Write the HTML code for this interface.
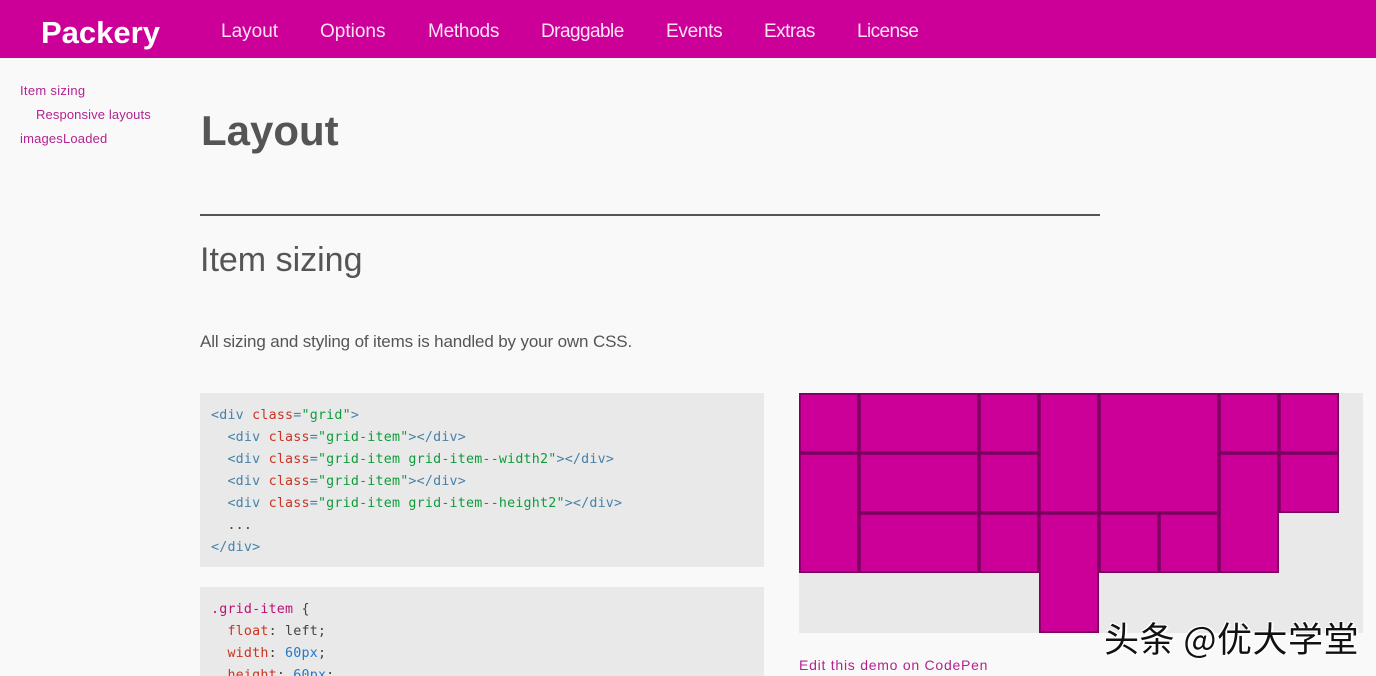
<!DOCTYPE html>
<html><head><meta charset="utf-8"><style>
html,body{margin:0;padding:0;width:1376px;height:676px;overflow:hidden;background:#f9f9f9}
body{position:relative;font-family:"Liberation Sans",sans-serif;color:#555}
.a{position:absolute;white-space:nowrap;line-height:1}
#hd{position:absolute;left:0;top:0;width:1376px;height:58px;background:#cc0099}
.n{color:#fbe3f4;font-size:19px;top:21px}
.s{color:#b3238f;font-size:13px}
.b{position:absolute;left:200px;width:564px;background:#e9e9e9}
pre{position:absolute;margin:0;left:211px;font:13.33px/22px "DejaVu Sans Mono","Liberation Mono",monospace;letter-spacing:.2px;color:#444}
.t{color:#4682a8}.k{color:#cc3322}.v{color:#0f9d3c}.c{color:#bb1177}.u{color:#2277cc}
.i{position:absolute;box-sizing:border-box;background:#cc0099;border:1px solid #7a0060;box-shadow:inset 0 0 0 1px rgba(122,0,96,.75)}
#wm{position:absolute;left:1104px;top:618px;font:35px/40px "Noto Sans CJK SC",sans-serif;color:#111;letter-spacing:.5px;white-space:nowrap;text-shadow:1px 1px 0 #fff,2px 1px 0 #fff,-1px -1px 0 #fff,1px -1px 0 #fff}
</style></head><body>
<div id="hd"></div>
<div class="a" style="left:41px;top:17px;font-size:31px;font-weight:bold;color:#fff;letter-spacing:0">Packery</div>
<div class="a n" style="left:221px;top:22px">Layout</div>
<div class="a n" style="left:320px;top:22px">Options</div>
<div class="a n" style="left:428px;top:22px;letter-spacing:-.25px">Methods</div>
<div class="a n" style="left:541px;top:22px;letter-spacing:-.55px">Draggable</div>
<div class="a n" style="left:666px;top:22px;letter-spacing:-.3px">Events</div>
<div class="a n" style="left:764px;top:22px;letter-spacing:-.5px">Extras</div>
<div class="a n" style="left:857px;top:22px;letter-spacing:-.6px">License</div>
<div class="a s" style="left:20px;top:84px;letter-spacing:.3px">Item sizing</div>
<div class="a s" style="left:36px;top:108px;letter-spacing:.12px">Responsive layouts</div>
<div class="a s" style="left:20px;top:132px;letter-spacing:.18px">imagesLoaded</div>
<div class="a" style="left:201px;top:110px;font-size:42px;font-weight:bold;color:#555">Layout</div>
<div style="position:absolute;left:200px;top:214px;width:900px;height:2px;background:#555"></div>
<div class="a" style="left:200px;top:243px;font-size:34px;color:#555">Item sizing</div>
<div class="a" style="left:200px;top:333px;font-size:17px;letter-spacing:-.14px;color:#555">All sizing and styling of items is handled by your own CSS.</div>
<div class="b" style="top:393px;height:174px"></div>
<pre style="top:405px"><span class="t">&lt;div</span> <span class="k">class</span><span class="t">=</span><span class="v">"grid"</span><span class="t">&gt;</span>
  <span class="t">&lt;div</span> <span class="k">class</span><span class="t">=</span><span class="v">"grid-item"</span><span class="t">&gt;&lt;/div&gt;</span>
  <span class="t">&lt;div</span> <span class="k">class</span><span class="t">=</span><span class="v">"grid-item grid-item--width2"</span><span class="t">&gt;&lt;/div&gt;</span>
  <span class="t">&lt;div</span> <span class="k">class</span><span class="t">=</span><span class="v">"grid-item"</span><span class="t">&gt;&lt;/div&gt;</span>
  <span class="t">&lt;div</span> <span class="k">class</span><span class="t">=</span><span class="v">"grid-item grid-item--height2"</span><span class="t">&gt;&lt;/div&gt;</span>
  ...
<span class="t">&lt;/div&gt;</span></pre>
<div class="b" style="top:587px;height:89px"></div>
<pre style="top:599px"><span class="c">.grid-item</span> {
  <span class="k">float</span>: left;
  <span class="k">width</span>: <span class="u">60px</span>;
  <span class="k">height</span>: <span class="u">60px</span>;</pre>
<div style="position:absolute;left:799px;top:393px;width:564px;height:240px;background:#e9e9e9"></div>
<div class="i" style="left:799px;top:393px;width:60px;height:60px"></div>
<div class="i" style="left:859px;top:393px;width:120px;height:60px"></div>
<div class="i" style="left:979px;top:393px;width:60px;height:60px"></div>
<div class="i" style="left:1039px;top:393px;width:60px;height:120px"></div>
<div class="i" style="left:1099px;top:393px;width:120px;height:120px"></div>
<div class="i" style="left:1219px;top:393px;width:60px;height:60px"></div>
<div class="i" style="left:1279px;top:393px;width:60px;height:60px"></div>
<div class="i" style="left:799px;top:453px;width:60px;height:120px"></div>
<div class="i" style="left:859px;top:453px;width:120px;height:60px"></div>
<div class="i" style="left:979px;top:453px;width:60px;height:60px"></div>
<div class="i" style="left:1219px;top:453px;width:60px;height:120px"></div>
<div class="i" style="left:1279px;top:453px;width:60px;height:60px"></div>
<div class="i" style="left:859px;top:513px;width:120px;height:60px"></div>
<div class="i" style="left:979px;top:513px;width:60px;height:60px"></div>
<div class="i" style="left:1039px;top:513px;width:60px;height:120px"></div>
<div class="i" style="left:1099px;top:513px;width:60px;height:60px"></div>
<div class="i" style="left:1159px;top:513px;width:60px;height:60px"></div>
<div class="a" style="left:799px;top:658px;font-size:14px;color:#b3238f;letter-spacing:.75px">Edit this demo on CodePen</div>
<div id="wm">头条 @优大学堂</div>
</body></html>
